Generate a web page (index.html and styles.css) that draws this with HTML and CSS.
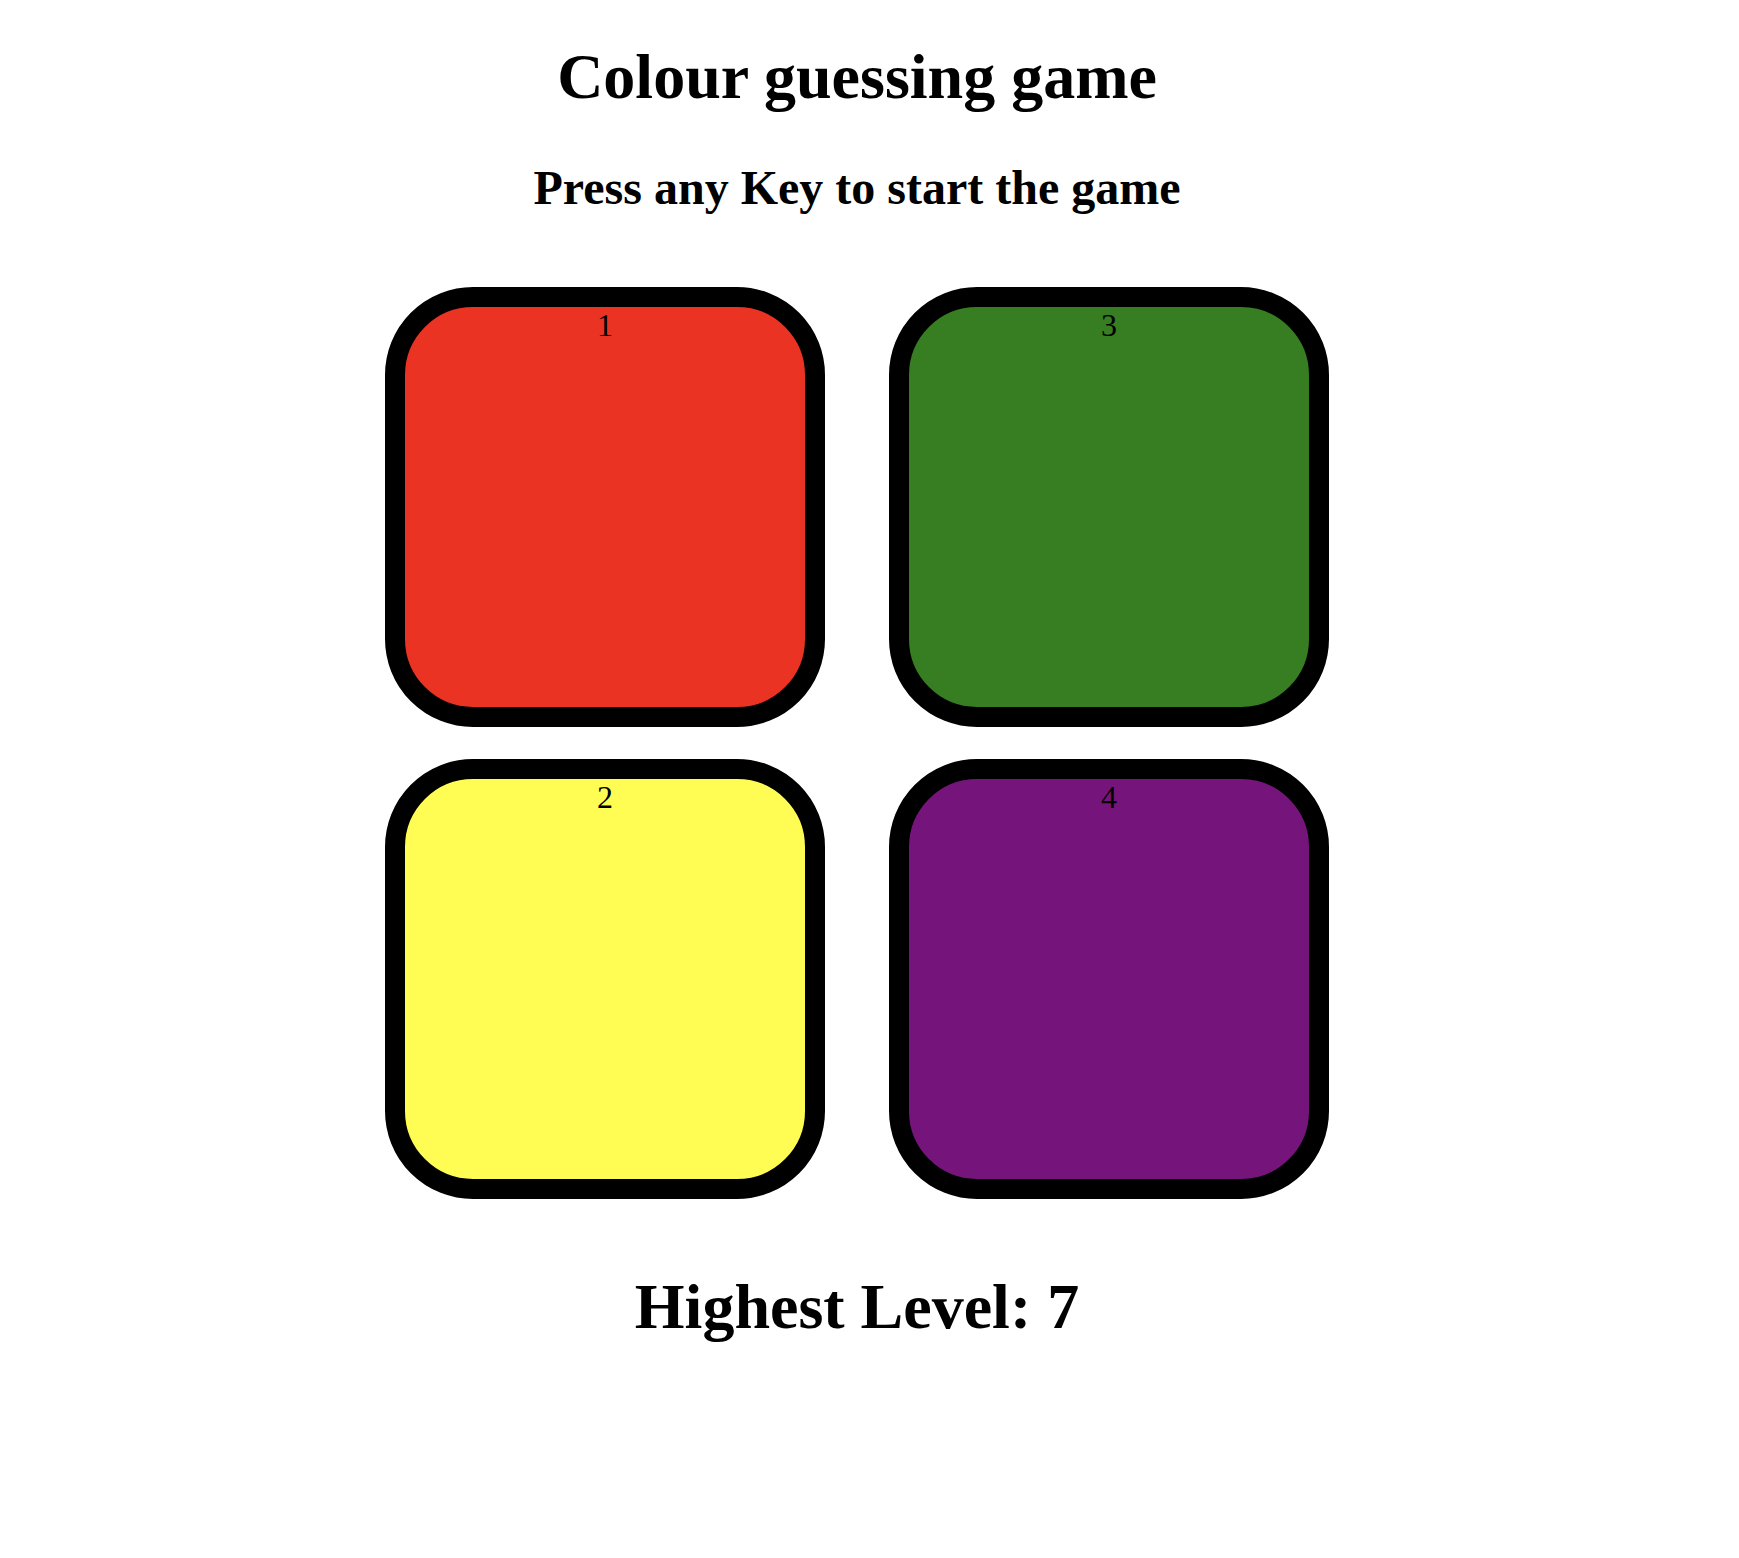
FILE: index.html
```html
<!DOCTYPE html>
<html lang="en">
<head>
<meta charset="utf-8">
<title>Colour guessing game</title>
<link rel="stylesheet" href="styles.css">
</head>
<body>
<div class="page">
  <h1 class="title">Colour guessing game</h1>
  <h2 class="subtitle">Press any Key to start the game</h2>
  <div class="board">
    <div class="pad pad-red">1</div>
    <div class="pad pad-green">3</div>
    <div class="pad pad-yellow">2</div>
    <div class="pad pad-purple">4</div>
  </div>
  <h1 class="score">Highest Level: 7</h1>
</div>
</body>
</html>
```

FILE: styles.css
```css
html, body {
  margin: 0;
  padding: 0;
  background: #ffffff;
}

body {
  font-family: "Liberation Serif", "Times New Roman", serif;
  color: #000000;
}

.page {
  width: 1714px;
  padding-top: 40px;
  text-align: center;
}

.title {
  margin: 0;
  font-size: 64px;
  line-height: 74px;
  font-weight: bold;
}

.subtitle {
  margin: 46px 0 0;
  font-size: 48px;
  line-height: 55px;
  font-weight: bold;
}

.board {
  margin-top: 72px;
  display: grid;
  grid-template-columns: 440px 440px;
  column-gap: 64px;
  row-gap: 32px;
  justify-content: center;
}

.pad {
  box-sizing: border-box;
  width: 440px;
  height: 440px;
  border: 20px solid #000000;
  border-radius: 20%;
  font-size: 32px;
  line-height: 37px;
  font-weight: normal;
  text-align: center;
}

.pad-red { background: #ea3323; }
.pad-green { background: #377d22; }
.pad-yellow { background: #fffd54; }
.pad-purple { background: #75157b; }

.score {
  margin: 71px 0 0;
  font-size: 64px;
  line-height: 74px;
  font-weight: bold;
}
```
